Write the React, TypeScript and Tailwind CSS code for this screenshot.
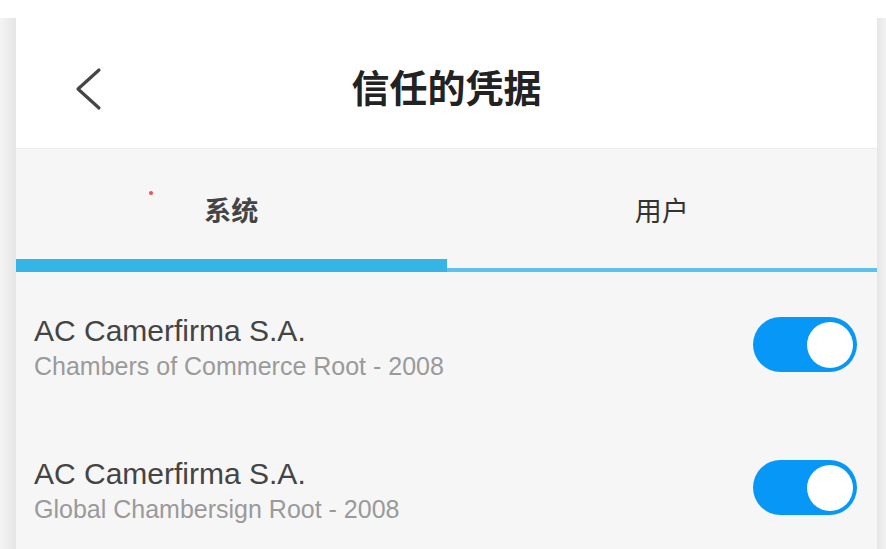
import { useState } from "react";

const certs = [
  { name: "AC Camerfirma S.A.", sub: "Chambers of Commerce Root - 2008" },
  { name: "AC Camerfirma S.A.", sub: "Global Chambersign Root - 2008" },
];

function Toggle({ on, onClick }: { on: boolean; onClick: () => void }) {
  return (
    <button
      onClick={onClick}
      className={`mt-[3px] flex h-[55px] w-[104px] shrink-0 items-center rounded-full px-[4px] ${
        on ? "justify-end bg-[#0797f7]" : "justify-start bg-[#d4d4d4]"
      }`}
    >
      <span className="h-[46px] w-[46px] rounded-full bg-white" />
    </button>
  );
}

export default function App() {
  const [tab, setTab] = useState(0);
  const [enabled, setEnabled] = useState([true, true]);

  return (
    <div
      className="h-[549px] w-[886px] overflow-hidden bg-white"
      style={{ fontFamily: '"Liberation Sans", "Noto Sans CJK SC", sans-serif' }}
    >
      {/* status bar gap */}
      <div className="h-[18px]" />

      <div className="flex h-[531px]">
        <div className="w-[16px] bg-gradient-to-r from-[#f4f4f4] to-[#e5e5e5]" />

        <div className="flex w-[861px] flex-col overflow-hidden bg-[#f6f6f6]">
          {/* Header */}
          <div className="grid h-[131px] shrink-0 grid-cols-[1fr_auto_1fr] items-center border-b border-[#ebebeb] bg-white pt-[12px]">
            <button className="ml-[59px] w-fit">
              <svg width="28" height="44" viewBox="0 0 28 44" fill="none">
                <polyline
                  points="24,3 3,22 24,41"
                  stroke="#454545"
                  strokeWidth="3.2"
                  strokeLinecap="round"
                  strokeLinejoin="round"
                />
              </svg>
            </button>
            <h1 className="text-[38px] font-bold text-[#222]">信任的凭据</h1>
            <div />
          </div>

          {/* Tabs */}
          <div className="relative flex h-[110px] shrink-0">
            <span className="absolute left-[133px] top-[42px] h-[4px] w-[4px] rounded-full bg-[#ff4a4a]" />
            {["系统", "用户"].map((label, i) => (
              <button
                key={label}
                onClick={() => setTab(i)}
                className={`flex flex-1 items-center justify-center pt-[16px] text-[27px] ${
                  tab === i ? "font-bold text-[#444]" : "text-[#333]"
                }`}
              >
                {label}
              </button>
            ))}
          </div>
          <div className="relative h-[13px] shrink-0">
            <div className="absolute inset-x-0 bottom-0 h-[4px] bg-[#5cc4ec]" />
            <div
              className={`absolute bottom-0 h-[13px] w-1/2 bg-[#35b5e5] ${
                tab === 0 ? "left-0" : "left-1/2"
              }`}
            />
          </div>

          {/* List */}
          <div className="flex shrink-0 flex-col">
            {certs.map((c, i) => (
              <div
                key={c.sub}
                className="flex h-[143px] shrink-0 items-start justify-between pl-[18px] pr-[20px] pt-[42px]"
              >
                <div>
                  <div className="text-[30px] leading-[34px] text-[#444]">{c.name}</div>
                  <div className="mt-[3px] text-[25px] leading-[30px] text-[#9a9a9a]">{c.sub}</div>
                </div>
                <Toggle
                  on={enabled[i]}
                  onClick={() =>
                    setEnabled((prev) => prev.map((v, j) => (j === i ? !v : v)))
                  }
                />
              </div>
            ))}
          </div>
        </div>

        <div className="w-[9px] bg-gradient-to-r from-[#e6e6e6] to-[#f2f2f2]" />
      </div>
    </div>
  );
}
